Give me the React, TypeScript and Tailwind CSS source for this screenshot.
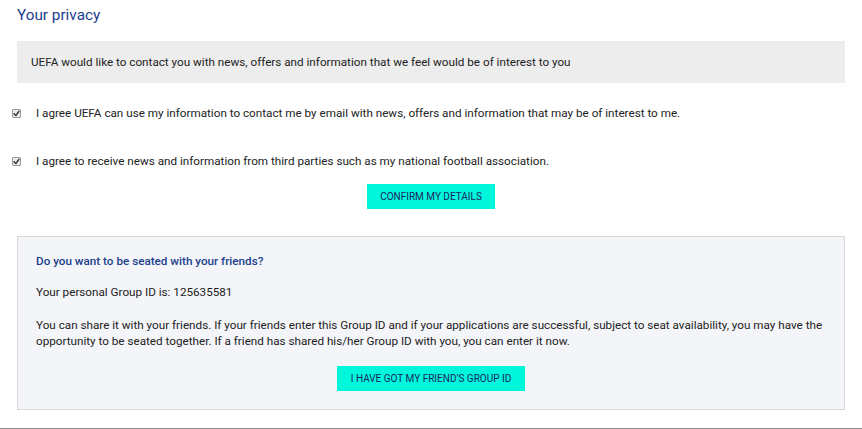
import React from "react";

function Check() {
  return (
    <span className="flex h-[9px] w-[9px] shrink-0 items-center justify-center rounded-[1px] border border-[#9a9a9a] bg-[#e9e9e9]">
      <svg width="7" height="7" viewBox="0 0 7 7">
        <path d="M1 3.8 L2.8 5.5 L6 1.3" stroke="#333" strokeWidth="1.4" fill="none" strokeLinecap="round" strokeLinejoin="round" />
      </svg>
    </span>
  );
}

export default function App() {
  return (
    <div
      className="relative flex h-[429px] w-[862px] flex-col overflow-hidden bg-white text-[11.7px] leading-[16px] text-[#222]"
      style={{ fontFamily: "Roboto, 'Liberation Sans', sans-serif" }}
    >
      <h1 className="ml-[17px] mt-[6px] text-[15.3px] leading-[19px] font-normal text-[#1b3e8c]">Your privacy</h1>

      <div className="mx-[17px] mt-[16px] flex h-[42px] items-center bg-[#ededed] px-[14px]">
        UEFA would like to contact you with news, offers and information that we feel would be of interest to you
      </div>

      <div className="ml-[12px] mt-[22px] flex items-center gap-[15px]">
        <Check />
        <span>I agree UEFA can use my information to contact me by email with news, offers and information that may be of interest to me.</span>
      </div>

      <div className="ml-[12px] mt-[32px] flex items-center gap-[15px]">
        <Check />
        <span>I agree to receive news and information from third parties such as my national football association.</span>
      </div>

      <div className="mt-[15px] flex justify-center">
        <button className="flex h-[25px] w-[128px] items-center justify-center bg-[#00f7dc] text-[10px] font-normal text-[#1a1f5c]">
          CONFIRM MY DETAILS
        </button>
      </div>

      <div className="mx-[17px] mt-[27px] flex flex-col border border-[#d9d9d9] bg-[#f4f5f9] px-[18px] pb-[18px] pt-[16px]">
        <h2 className="font-medium text-[#1b3e8c]">Do you want to be seated with your friends?</h2>
        <p className="mt-[15px]">Your personal Group ID is: 125635581</p>
        <p className="mt-[17px] -mr-[10px]">
          You can share it with your friends. If your friends enter this Group ID and if your applications are successful, subject to seat availability, you may have the opportunity to be seated together. If a friend has shared his/her Group ID with you, you can enter it now.
        </p>
        <div className="mt-[17px] flex justify-center">
          <button className="flex h-[25px] w-[188px] items-center justify-center bg-[#00f7dc] text-[10px] font-normal text-[#1a1f5c]">
            I HAVE GOT MY FRIEND’S GROUP ID
          </button>
        </div>
      </div>

      <div className="mt-auto h-px w-full bg-[#8a8a8a]" />
    </div>
  );
}
